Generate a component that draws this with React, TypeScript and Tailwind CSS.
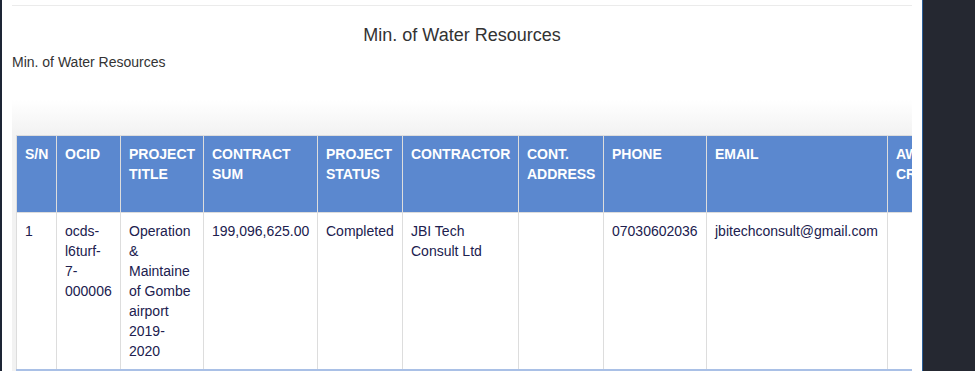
const columns: { w: string; head: string[]; body: string[] }[] = [
  { w: "w-[40px]", head: ["S/N"], body: ["1"] },
  { w: "w-[64px]", head: ["OCID"], body: ["ocds-", "l6turf-", "7-", "000006"] },
  {
    w: "w-[83px]",
    head: ["PROJECT", "TITLE"],
    body: ["Operation", "&", "Maintaine", "of Gombe", "airport", "2019-", "2020"],
  },
  { w: "w-[114px]", head: ["CONTRACT", "SUM"], body: ["199,096,625.00"] },
  { w: "w-[85px]", head: ["PROJECT", "STATUS"], body: ["Completed"] },
  { w: "w-[116px]", head: ["CONTRACTOR"], body: ["JBI Tech", "Consult Ltd"] },
  { w: "w-[85px]", head: ["CONT.", "ADDRESS"], body: [] },
  { w: "w-[103px]", head: ["PHONE"], body: ["07030602036"] },
  { w: "w-[181px]", head: ["EMAIL"], body: ["jbitechconsult@gmail.com"] },
  { w: "w-[150px]", head: ["AWARD", "CRITERIA"], body: [] },
];

function Lines({ lines }: { lines: string[] }) {
  return (
    <>
      {lines.map((l, i) => (
        <div key={i} className="whitespace-nowrap">
          {l}
        </div>
      ))}
    </>
  );
}

export default function App() {
  return (
    <div
      className="flex h-[371px] w-[975px] overflow-hidden bg-white"
      style={{ fontFamily: '"Liberation Sans", Arial, sans-serif' }}
    >
      {/* left window edge */}
      <div className="w-[2px] shrink-0 bg-[#1d2535]" />

      {/* page */}
      <div className="flex w-[920px] shrink-0 flex-col overflow-hidden px-[10px] pt-[5px]">
        <div className="h-px w-[900px] bg-[#ebebeb]" />

        <h2 className="mt-[19px] text-center text-[18px] leading-[20px] text-[#333]">
          Min. of Water Resources
        </h2>
        <p className="mt-[7px] text-[14px] leading-[20px] text-[#333]">
          Min. of Water Resources
        </p>

        {/* scrollable table area */}
        <div className="mt-[28px] w-[900px] overflow-hidden bg-[linear-gradient(to_bottom,#ffffff_0px,#f2f2f2_35px,#f2f2f2_100%)] pl-[4px] pt-[35px]">
          <div className="flex w-max flex-col">
            {/* header row */}
            <div className="flex border-t border-[#dddddd] bg-[#5b88cf]">
              {columns.map((c, i) => (
                <div
                  key={i}
                  className={`${c.w} h-[76px] shrink-0 border-l border-[#dddddd] px-[8px] py-[8px] text-[14px] font-bold leading-[20px] text-white`}
                >
                  <Lines lines={c.head} />
                </div>
              ))}
            </div>

            {/* data row */}
            <div className="flex border-b-2 border-t border-b-[#a9c0e6] border-t-[#dddddd] bg-white">
              {columns.map((c, i) => (
                <div
                  key={i}
                  className={`${c.w} h-[156px] shrink-0 border-l border-[#dddddd] px-[8px] py-[8px] text-[14px] leading-[20px] text-[#20204e]`}
                >
                  <Lines lines={c.body} />
                </div>
              ))}
            </div>
          </div>
        </div>
      </div>

      {/* side panel */}
      <div className="flex-1 border-l border-[#2a5f99] bg-[#252831]" />
    </div>
  );
}
